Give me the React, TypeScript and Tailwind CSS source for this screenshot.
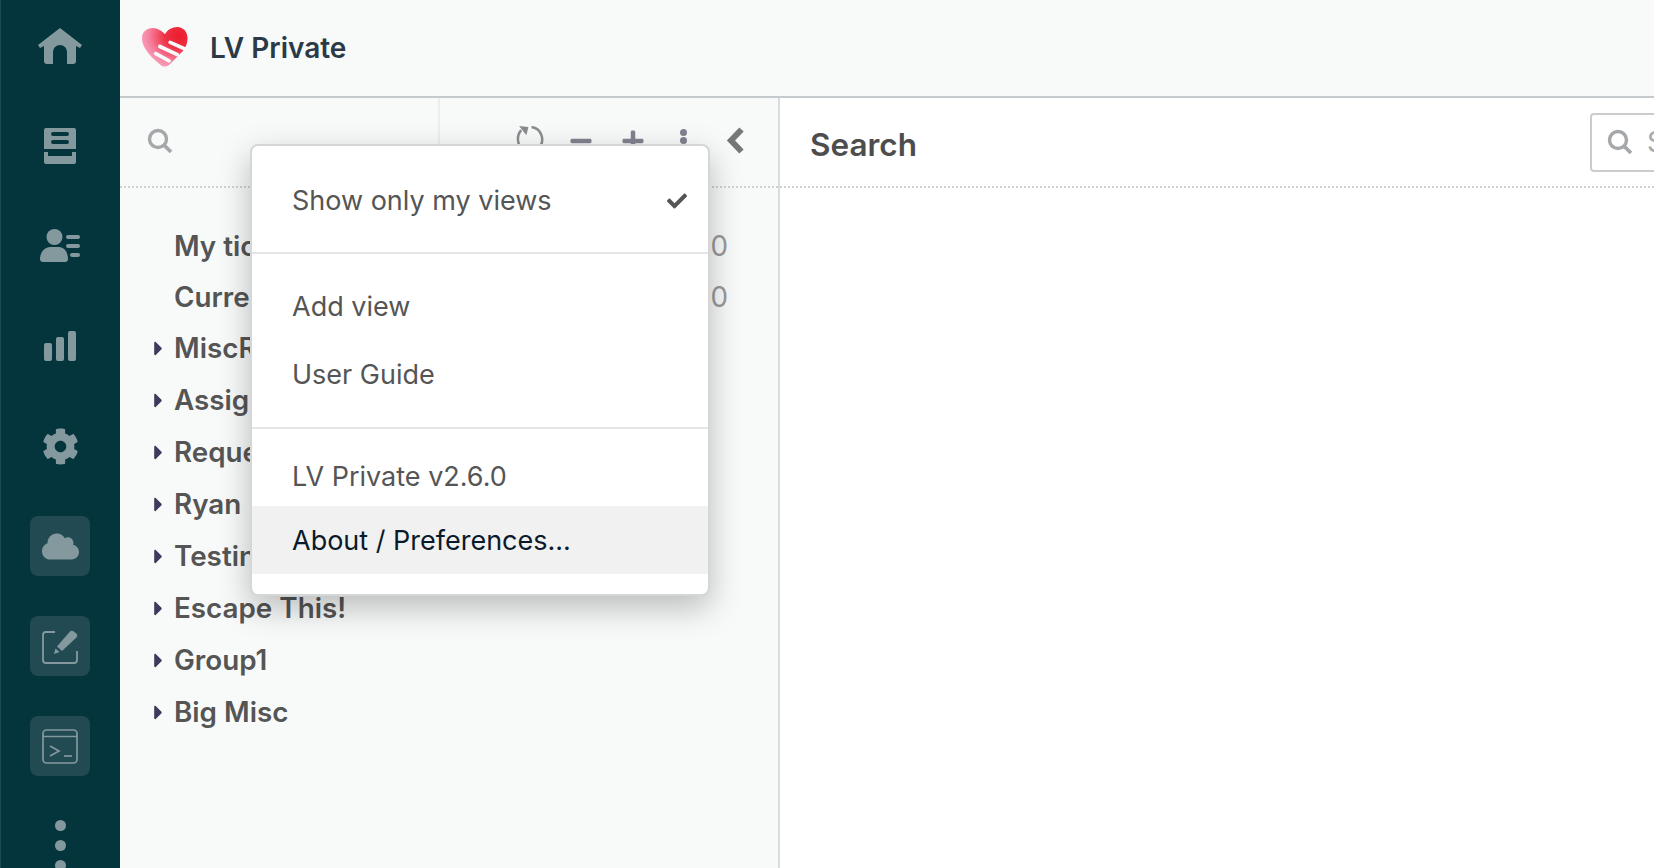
import React from "react";
import { FaCloud, FaCheck, FaPlus, FaMinus, FaCog, FaCaretRight } from "react-icons/fa";

const Rail = ({ children, boxed }: { children: React.ReactNode; boxed?: boolean }) => (
  <div className={`w-[60px] h-[60px] flex items-center justify-center rounded-lg text-[#84999e] ${boxed ? "bg-[#224a52]" : ""}`}>{children}</div>
);

const Search = ({ className = "" }: { className?: string }) => (
  <svg viewBox="0 0 26 26" className={className} fill="none" stroke="currentColor">
    <circle cx="11" cy="11" r="8.5" strokeWidth="3.4" />
    <path d="M17.5 17.5L24 24" strokeWidth="3.8" />
  </svg>
);

const Tree = ({ label, count, caret }: { label: string; count?: string; caret?: boolean }) => (
  <div className={`${count ? "h-[51px] pt-[1px]" : "h-[52px]"} flex items-center relative pl-[54px] pr-[50px] text-[27.8px] font-semibold text-[#555] whitespace-nowrap`}>
    {caret && <FaCaretRight className="absolute left-[27px] top-[14px] text-[#3d3a5c] text-[23px]" />}
    <span className="flex-1">{label}</span>
    {count && <span className="font-normal text-[#999]">{count}</span>}
  </div>
);

const Item = ({ children, active, check }: { children: React.ReactNode; active?: boolean; check?: boolean }) => (
  <div className={`flex items-center justify-between pl-[40px] pr-[21px] h-[68px] text-[27px] ${active ? "bg-[#f1f1f1] text-[#0a1a2a] pt-[2px]" : "text-[#555]"}`}>
    <span>{children}</span>
    {check && <FaCheck className="text-[20px] text-[#555]" />}
  </div>
);

export default function App() {
  return (
    <div className="w-[1654px] h-[868px] overflow-hidden flex bg-white font-['Inter',sans-serif]">
      <nav className="w-[120px] shrink-0 bg-[#04343c] shadow-[inset_1px_0_0_#1f4a52] flex flex-col items-center pt-[15px] overflow-hidden">
        <div className="h-[100px] flex flex-none items-start"><Rail>
          <svg viewBox="0 0 44 36" className="w-[44px] h-[36px] mt-[1px]" fill="currentColor">
            <path d="M22 0L44 17L42 20L38 18V33a3 3 0 0 1-3 3H29V24a7 7 0 0 0-14 0V36H9a3 3 0 0 1-3-3V18L2 20L0 17Z" />
          </svg>
        </Rail></div>
        <div className="h-[101px] flex flex-none items-start"><Rail>
          <svg viewBox="0 0 32 36" className="w-[32px] h-[36px] mt-[1px]" fill="currentColor">
            <path fillRule="evenodd" d="M2 0h28a2 2 0 0 1 2 2v19H0V2a2 2 0 0 1 2-2zM9 4a2 2 0 0 0 0 4h14a2 2 0 0 0 0-4zM9 12a2 2 0 0 0 0 4h14a2 2 0 0 0 0-4z" />
            <path d="M0 24h4v4h24v-4h4v10a2 2 0 0 1-2 2H2a2 2 0 0 1-2-2z" />
          </svg>
        </Rail></div>
        <div className="h-[100px] flex flex-none items-start"><Rail>
          <svg viewBox="0 0 40 33" className="w-[40px] h-[33px] -mt-[1px]" fill="currentColor">
            <circle cx="14.5" cy="8" r="8" />
            <path d="M0 30c0-7 5-12 10-12h9c5 0 9 5 9 12 0 2-1 3-3 3H3c-2 0-3-1-3-3z" />
            <rect x="26" y="6" width="14" height="4" rx="2" />
            <rect x="26" y="15" width="14" height="4" rx="2" />
            <rect x="30" y="24" width="10" height="4" rx="2" />
          </svg>
        </Rail></div>
        <div className="h-[100px] flex flex-none items-start"><Rail>
          <svg viewBox="0 0 32 30" className="w-[32px] h-[30px]" fill="currentColor">
            <rect x="0" y="12" width="8" height="18" rx="2" />
            <rect x="12" y="6" width="8" height="24" rx="2" />
            <rect x="24" y="0" width="8" height="30" rx="2" />
          </svg>
        </Rail></div>
        <div className="h-[100px] flex flex-none items-start"><Rail><FaCog className="text-[37px]" /></Rail></div>
        <div className="h-[100px] flex flex-none items-start"><Rail boxed><FaCloud className="text-[37px]" /></Rail></div>
        <div className="h-[100px] flex flex-none items-start"><Rail boxed>
          <svg viewBox="0 -3 37 37" className="w-[37px] h-[37px]" fill="none" stroke="currentColor" strokeWidth="1.8">
            <path d="M13 1H4a3 3 0 0 0-3 3V29a3 3 0 0 0 3 3H32a3 3 0 0 0 3-3V20" />
            <path d="M12 23l1.5-5.5 4 3.5zM15 15.5L28 0.5c1-1 2.5-1.200 3.500-0.200l3 2.500c1 1 1 2.500 0.200 3.500L20 20z" fill="currentColor" stroke="none" />
          </svg>
        </Rail></div>
        <div className="h-[100px] flex flex-none items-start"><Rail boxed>
          <svg viewBox="0 0 36 35" className="w-[36px] h-[35px]" fill="none" stroke="currentColor" strokeWidth="1.7">
            <rect x="1" y="1" width="34" height="33" rx="3.500" />
            <path d="M1 7.500h34" />
            <path d="M8 17l9 5-9 5" />
            <path d="M22 27h8" />
          </svg>
        </Rail></div>
        <div className="flex flex-col gap-[9px] flex-none pt-[4px]">
          <span className="w-[11px] h-[11px] rounded-full bg-[#84999e]" />
          <span className="w-[11px] h-[11px] rounded-full bg-[#84999e]" />
          <span className="w-[11px] h-[11px] rounded-full bg-[#84999e]" />
        </div>
      </nav>

      <div className="flex-1 flex flex-col min-w-0">
        <header className="h-[98px] shrink-0 bg-[#f8fafa] border-b-2 border-[#c5cacd] flex items-center pl-[21px] gap-[21px]">
          <svg viewBox="0 0 46 40" className="w-[48px] h-[41px] -mt-[2px]">
            <defs>
              <radialGradient id="lg" cx="0.82" cy="0.22" r="0.95">
                <stop offset="0" stopColor="#ec1c2c" />
                <stop offset="0.35" stopColor="#ef3346" />
                <stop offset="0.7" stopColor="#f6809f" />
                <stop offset="1" stopColor="#f9b0c8" />
              </radialGradient>
            </defs>
            <path d="M20 38C12 32 1 22 0.500 12C0 5 5 1 11 1C16 1 20 4 23 7C25 3 30 0 35 0C41 0 45 5 45 11C45 16 43 20 41 23L28 36C25 39 22 39 20 38Z" fill="url(#lg)" />
            <path d="M28 15L46 23M18 19L35 27M14 26L27 33" stroke="#f8fafa" strokeWidth="3.600" fill="none" strokeLinecap="round" />
          </svg>
          <span className="text-[28px] font-semibold text-[#2b3a46]">LV Private</span>
        </header>

        <div className="flex-1 flex min-h-0">
          <aside className="w-[660px] shrink-0 bg-[#f8fafa] border-r-2 border-[#d9dcdd] relative">
            <div className="h-[90px] flex border-b-2 border-dotted border-[#cfd2d3]">
              <div className="w-[320px] border-r-2 border-[#eceeee] flex items-center pl-[27px] pb-[2px] text-[#a5a8aa]">
                <Search className="w-[26px] h-[26px]" />
              </div>
              <div className="flex-1 flex items-center pl-[76px] gap-[26px] -mt-[3px]">
                <svg viewBox="0 0 28 28" className="w-[29px] h-[29px] -mt-[2px] text-[#8a8d90]" fill="none" stroke="currentColor" strokeWidth="2.400">
                  <path d="M5 5a13 13 0 0 0 1 18" />
                  <path d="M15 2a12 12 0 0 1 6 21" />
                  <path d="M3 1l9 1-2 8z" fill="currentColor" stroke="none" />
                </svg>
                <FaMinus className="text-[24px] text-[#80828f] -ml-[2px]" />
                <FaPlus className="text-[24px] text-[#80828f] ml-[2px]" />
                <div className="flex flex-col gap-[1.5px] ml-[9px]">
                  <span className="w-[7px] h-[7px] rounded-full bg-[#80828f]" />
                  <span className="w-[7px] h-[7px] rounded-full bg-[#80828f]" />
                  <span className="w-[7px] h-[7px] rounded-full bg-[#80828f]" />
                </div>
                <svg viewBox="0 0 18 27" className="w-[18px] h-[27px] ml-[13px] text-[#777]" fill="none" stroke="currentColor" strokeWidth="6">
                  <path d="M15.500 2.500L5 13.500L15.500 24.500" />
                </svg>
              </div>
            </div>

            <div className="pt-[33px]">
              <Tree label="My tickets" count="0" />
              <Tree label="Current" count="0" />
              <Tree label="MiscR" caret />
              <Tree label="Assigned" caret />
              <Tree label="Requests" caret />
              <Tree label="Ryan" caret />
              <Tree label="Testing" caret />
              <Tree label="Escape This!" caret />
              <Tree label="Group1" caret />
              <Tree label="Big Misc" caret />
            </div>

            <div className="absolute left-[130px] top-[46px] w-[460px] h-[452px] bg-white rounded-lg border-2 border-[#d4d6d7] shadow-[0_12px_32px_rgba(0,0,0,0.25)] flex flex-col pt-[21px]">
              <Item check>Show only my views</Item>
              <div className="h-[2px] bg-[#e5e5e5] mt-[17px] mb-[19px]" />
              <Item>Add view</Item>
              <Item>User Guide</Item>
              <div className="h-[2px] bg-[#e5e5e5] mt-[18px] mb-[18px]" />
              <div className="h-[59px] flex items-center pl-[40px] pt-[1px] text-[27px] text-[#555]">LV Private v2.6.0</div>
              <Item active>About / Preferences...</Item>
            </div>
          </aside>

          <main className="flex-1 min-w-0 overflow-hidden">
            <div className="h-[90px] border-b-2 border-dotted border-[#cfd2d3] flex items-center justify-between pl-[30px]">
              <span className="text-[31.5px] font-semibold text-[#4d4d4d] pt-[6px]">Search</span>
              <div className="w-[100px] -mr-[36px] h-[59px] border-2 border-[#cccccc] rounded flex items-center pl-[15px] gap-[14px] text-[#a5a8aa] overflow-hidden">
                <Search className="w-[26px] h-[26px] shrink-0" />
                <span className="text-[28px]">Search</span>
              </div>
            </div>
          </main>
        </div>
      </div>
    </div>
  );
}
